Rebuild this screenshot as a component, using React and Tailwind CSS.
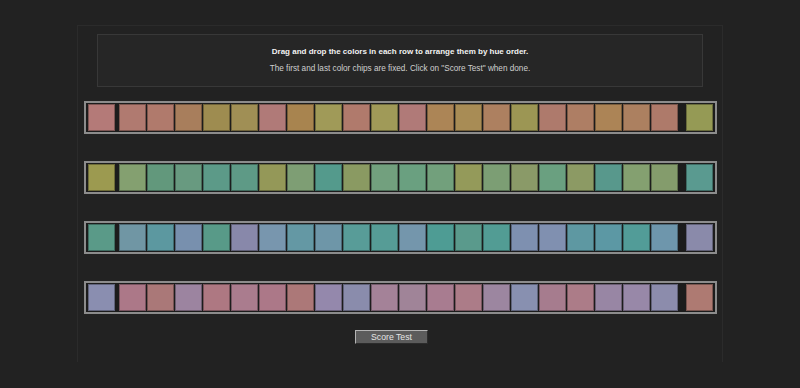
const rows = [
  {
    first: "#b47a78",
    last: "#959a55",
    chips: [
      "#b07a70", "#b07a6c", "#a87e5c", "#9e8c50", "#a08f55",
      "#b07a78", "#a8844f", "#a09a58", "#b07a6c", "#a09a58",
      "#b07a78", "#ac8556", "#a88c55", "#ad8060", "#9c9654",
      "#ae7a6c", "#ae7e64", "#ac8456", "#ac8060", "#ae7a6a",
    ],
  },
  {
    first: "#9c9a50",
    last: "#5a9a90",
    chips: [
      "#84a070", "#62987c", "#689a80", "#5c9a88", "#5e9a86",
      "#949858", "#7e9e74", "#549a8c", "#8a9a62", "#72a07e",
      "#6aa080", "#72a07c", "#949a5a", "#7c9e74", "#8a9a68",
      "#6aa080", "#8c9a64", "#58988c", "#84a070", "#849c6c",
    ],
  },
  {
    first: "#5a9a88",
    last: "#8a8aaa",
    chips: [
      "#7096a4", "#5c98a0", "#7890ae", "#589a88", "#8888aa",
      "#7896ae", "#6498a4", "#6e96a8", "#589c98", "#569c96",
      "#7496ac", "#4e9c94", "#5a9a8c", "#529c94", "#7e90b0",
      "#8090b0", "#5e98a2", "#5c98a4", "#529c98", "#6e96ac",
    ],
  },
  {
    first: "#8a8eb0",
    last: "#ae7a72",
    chips: [
      "#ac7888", "#aa7878", "#9c84a0", "#ae7882", "#aa7c8e",
      "#ac7888", "#ac7878", "#9488ac", "#8a8cac", "#a48298",
      "#a08498", "#a87c90", "#ac7c88", "#9c86a0", "#8890b0",
      "#a67c8e", "#ac7c88", "#9886a4", "#9888a8", "#8c8cac",
    ],
  },
];

const Chip = ({ color }) => (
  <div
    className="h-[27px] w-[27px] shadow-[inset_0_0_0_1px_rgba(0,0,0,0.3)]"
    style={{ backgroundColor: color }}
  />
);

const App = () => {
  return (
    <div
      className="min-h-[388px] w-full bg-[#222222] pt-[25px]"
      style={{ fontFamily: '"Liberation Sans", Arial, sans-serif' }}
    >
      <div className="mx-auto flex h-[337px] w-[646px] flex-col border border-b-0 border-[#2b2b2b]">
        {/* instructions */}
        <div className="mx-auto mt-[8px] flex h-[53px] w-[606px] flex-col items-center justify-center gap-[7px] border border-[#383838] bg-[#262626]">
          <p className="text-[8px] leading-[10px] font-bold text-[#f2f2f2]">
            Drag and drop the colors in each row to arrange them by hue order.
          </p>
          <p className="text-[8.2px] leading-[10px] text-[#cfcfcf]">
            The first and last color chips are fixed. Click on "Score Test"
            when done.
          </p>
        </div>

        {/* trays */}
        <div className="mt-[14px] flex flex-col gap-[27px]">
          {rows.map((row, index) => (
            <div
              key={index}
              className="mx-auto flex w-[633px] border-2 border-[#8c8c8c] bg-[#1c1c1c] px-[2px] py-[1px]"
            >
              <Chip color={row.first} />
              <div className="ml-[4px] flex gap-px">
                {row.chips.map((c, i) => (
                  <Chip key={i} color={c} />
                ))}
              </div>
              <div className="ml-auto">
                <Chip color={row.last} />
              </div>
            </div>
          ))}
        </div>

        <div className="mt-[16px] flex justify-center pr-[17px]">
          <button className="h-[14px] w-[73px] border border-t-[#b4b4b4] border-l-[#b4b4b4] border-r-[#2c2c2c] border-b-[#2c2c2c] bg-[#5c5c5c] text-[8.7px] leading-[12px] text-[#e4e4e4]">
            Score Test
          </button>
        </div>
      </div>
    </div>
  );
};

export default App;
